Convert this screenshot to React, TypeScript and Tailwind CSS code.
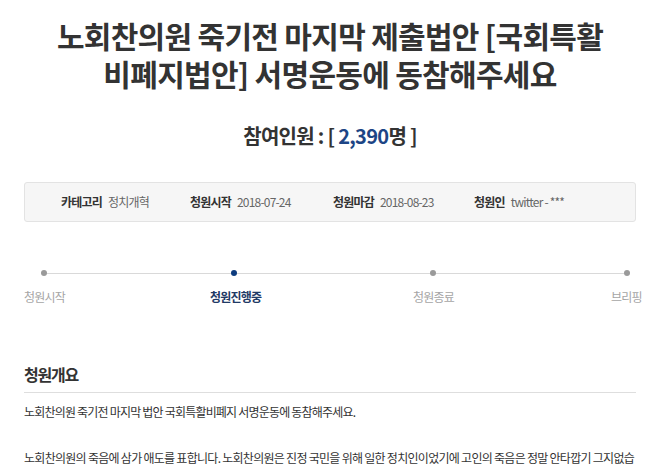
const font = { fontFamily: '"Noto Sans CJK KR", "Noto Sans", sans-serif' };

const meta = [
  { label: "카테고리", value: "정치개혁", w: "w-[129px]" },
  { label: "청원시작", value: "2018-07-24", w: "w-[143px]" },
  { label: "청원마감", value: "2018-08-23", w: "w-[141px]" },
  { label: "청원인", value: "twitter - ***", w: "" },
];

export default function App() {
  return (
    <div className="min-h-screen bg-white text-[#333]" style={font}>
      <main className="px-6">
        <h1 className="pt-[16px] text-center text-[30px] font-bold leading-[38px] tracking-[-0.7px] text-[#333]">
          노회찬의원 죽기전 마지막 제출법안 [국회특활
          <br />
          비폐지법안] 서명운동에 동참해주세요
        </h1>

        <p className="mt-[29px] text-center text-[20px] font-bold leading-[30px] tracking-[-0.7px] text-[#333]">
          참여인원 : [ <span className="text-[#1d4585]">2,390</span>명 ]
        </p>

        <div className="mt-[31px] flex h-[40px] items-center rounded-[3px] border border-[#e3e3e3] bg-[#f6f6f6] pl-[36px] text-[12px] tracking-[-0.8px]">
          {meta.map((m) => (
            <div key={m.label} className={`flex items-center gap-[6px] whitespace-nowrap ${m.w}`}>
              <span className="font-bold text-[#333]">{m.label}</span>
              <span className="text-[#666]">{m.value}</span>
            </div>
          ))}
        </div>

        <div className="mt-[48px] flex items-center pl-[17px]">
          <span className="h-[6px] w-[6px] rounded-full bg-[#9a9a9a]" />
          <span className="h-px w-[184px] bg-[#d9d9d9]" />
          <span className="h-[6px] w-[6px] rounded-full bg-[#0d3c7e]" />
          <span className="h-px w-[193px] bg-[#d9d9d9]" />
          <span className="h-[6px] w-[6px] rounded-full bg-[#9a9a9a]" />
          <span className="h-px w-[188px] bg-[#d9d9d9]" />
          <span className="h-[6px] w-[6px] rounded-full bg-[#9a9a9a]" />
        </div>
        <div className="mt-[12px] flex text-[12px] leading-[18px] tracking-[-0.8px]">
          <span className="w-[41px] whitespace-nowrap text-center text-[#a5a5a5]">청원시작</span>
          <span className="ml-[145px] w-[50px] whitespace-nowrap text-center font-bold text-[#1f3a66]">청원진행중</span>
          <span className="ml-[153px] w-[42px] whitespace-nowrap text-center text-[#a5a5a5]">청원종료</span>
          <span className="ml-[157px] w-[31px] whitespace-nowrap text-center text-[#a5a5a5]">브리핑</span>
        </div>

        <section className="mt-[57px]">
          <h2 className="border-b border-[#dedede] pb-[7px] text-[16px] font-bold leading-[22px] tracking-[-1.2px] text-[#333]">청원개요</h2>
          <p className="mt-[10px] text-[12px] leading-[18px] tracking-[-0.8px] text-[#333]">
            노회찬의원 죽기전 마지막 법안 국회특활비폐지 서명운동에 동참해주세요.
          </p>
          <p className="mt-[28px] text-[12px] leading-[18px] tracking-[-0.72px] text-[#333]">
            노회찬의원의 죽음에 삼가 애도를 표합니다. 노회찬의원은 진정 국민을 위해 일한 정치인이었기에 고인의 죽음은 정말 안타깝기 그지없습니다.
          </p>
        </section>
      </main>
    </div>
  );
}
